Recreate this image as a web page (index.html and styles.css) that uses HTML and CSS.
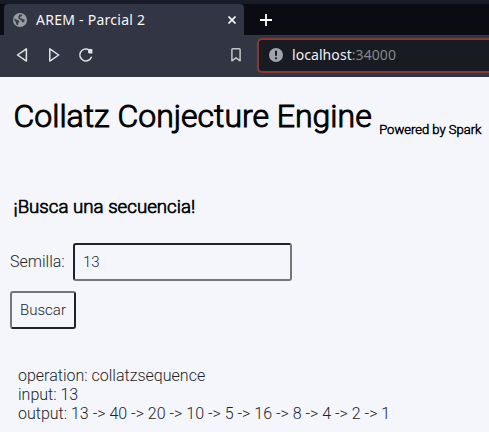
FILE: index.html
```html
<!DOCTYPE html>
<html lang="es">
<head>
<meta charset="utf-8">
<title>AREM - Parcial 2</title>
<link rel="stylesheet" href="styles.css">
</head>
<body>
<header class="browser">
  <div class="tabs">
    <div class="tab">
      <svg class="globe" width="14" height="14" viewBox="0 0 14 14"><circle cx="7" cy="7" r="7" fill="#9a9da4"/><path d="M1.4 5.2 3.2 6.6 5.6 7.2 6.4 8.8 5.2 10 5 12.2 3 11.2 2.8 9 1.4 7.2ZM6.4 1.4 9.4 1.8 8.8 3.2 7.2 3.8 6.8 5.2 8.8 5.6 10.4 6.4 11.8 6.6 11.2 9 9.4 9.4 8.6 7.6 6.4 6.6 5 4.8Z" fill="#3b3e49"/></svg>
      <span class="tab-title">AREM - Parcial 2</span>
      <svg class="close" width="8" height="8" viewBox="0 0 8 8"><path d="M.5.5 7.5 7.5M7.5.5.5 7.5" stroke="#f2f2f2" stroke-width="1.7"/></svg>
    </div>
    <svg class="plus" width="12" height="12" viewBox="0 0 12 12"><path d="M6 0v12M0 6h12" stroke="#fff" stroke-width="1.8"/></svg>
  </div>
  <div class="toolbar">
    <svg class="back" width="12" height="16" viewBox="0 0 12 16"><path d="M10.4 1.9v12.2L1.5 8Z" fill="none" stroke="#e4e4e7" stroke-width="1.5" stroke-linejoin="round"/></svg>
    <svg class="forward" width="12" height="16" viewBox="0 0 12 16"><path d="M1.8 1.9v12.2L10.7 8Z" fill="none" stroke="#e4e4e7" stroke-width="1.5" stroke-linejoin="round"/></svg>
    <svg class="reload" width="16" height="16" viewBox="0 0 16 16"><path d="M13.4 10.2A6 6 0 1 1 11 2.8" fill="none" stroke="#e4e4e7" stroke-width="1.5" stroke-linecap="round"/><path d="M10 5.5V3.8l1.6-2 2.8.4v4.4H11Z" fill="#e4e4e7"/></svg>
    <svg class="bookmark" width="10" height="14" viewBox="0 0 10 14"><path d="M.9 12.8V1.6Q.9.8 1.7.8h6.6q.8 0 .8.8v11.2L5 9.8Z" fill="none" stroke="#c4c5c9" stroke-width="1.5" stroke-linejoin="round"/></svg>
    <div class="address">
      <svg width="14" height="14" viewBox="0 0 14 14"><circle cx="7" cy="7" r="7" fill="#a0a3ab"/><path d="M7 2.7v5.1" stroke="#181b22" stroke-width="2"/><circle cx="7" cy="10.3" r="1.1" fill="#181b22"/></svg>
      <span class="url">localhost<span class="port">:34000</span></span>
    </div>
  </div>
</header>
<main>
  <div class="heading"><h1>Collatz Conjecture Engine</h1><small>Powered by Spark</small></div>
  <h2>¡Busca una secuencia!</h2>
  <form>
    <div class="row"><label for="seed">Semilla:</label><input id="seed" type="text" value="13"></div>
    <button type="button">Buscar</button>
  </form>
  <div class="result">operation: collatzsequence<br>input: 13<br>output: 13 -&gt; 40 -&gt; 20 -&gt; 10 -&gt; 5 -&gt; 16 -&gt; 8 -&gt; 4 -&gt; 2 -&gt; 1</div>
</main>
</body>
</html>
```
FILE: styles.css
```css
* { box-sizing: border-box; }
body { margin: 0; height: 432px; overflow: hidden; background: #f4f6fb; color: #212529; font: 300 16px/19px Roboto, sans-serif; }
svg { display: block; flex: none; }
.browser { height: 77px; background: #323543; border-top: 4px solid #181c26; font-family: "Noto Sans", sans-serif; font-weight: 400; }
.tabs { height: 31px; display: flex; align-items: flex-start; background: #0b0b14; padding-left: 4px; }
.tab { width: 240px; height: 31px; display: flex; align-items: center; background: #323543; border-radius: 4px 4px 0 0; padding: 1px 8px 0 9px; }
.tab-title { margin-left: 9px; padding-bottom: 2px; font-size: 14px; letter-spacing: .26px; color: #f7f7f8; white-space: nowrap; }
.close { margin-left: auto; }
.plus { margin: 10px 0 0 16px; }
.toolbar { height: 42px; display: flex; align-items: center; padding-left: 16px; padding-bottom: 2px; }
.forward { margin-left: 20px; }
.reload { margin-left: 18px; }
.bookmark { margin-left: 137px; }
.address { display: flex; align-items: center; flex: 1; height: 35px; margin-left: 16px; padding-left: 10px; background: #181b22; border: 2px solid #843b34; border-right: 0; border-radius: 5px 0 0 5px; }
.url { margin-left: 9px; padding-bottom: 2px; font-size: 14px; letter-spacing: .07px; color: #f1f1f2; }
.port { color: #85878c; }
main { padding-left: 10px; }
.heading { display: flex; align-items: baseline; padding: 20px 0 0 3.5px; height: 109px; color: #000; white-space: nowrap; }
h1 { margin: 0; font-size: 32px; line-height: 38px; font-weight: 300; -webkit-text-stroke: 1px #000; }
small { margin-left: 7.5px; font-size: 13px; line-height: 16px; -webkit-text-stroke: .5px #000; position: relative; top: 7px; }
h2 { margin: 11px 0 25px 3.5px; font-size: 18.7px; line-height: 21px; font-weight: 300; color: #000; -webkit-text-stroke: .7px #000; }
.row { display: flex; align-items: center; height: 38px; }
label { width: 63px; padding-bottom: 2px; }
input, button { font: inherit; font-size: 15px; color: #212529; background: transparent; border: 2px solid; border-radius: 3px; height: 38px; }
input { width: 219px; padding: 0 8px 1px; border-color: #212126 #767676 #767676 #212126; }
button { display: block; width: 66px; margin-top: 10px; padding: 0; border-color: #767676 #212126 #212126 #767676; }
.result { margin: 37px 0 0 8px; white-space: nowrap; }
```
